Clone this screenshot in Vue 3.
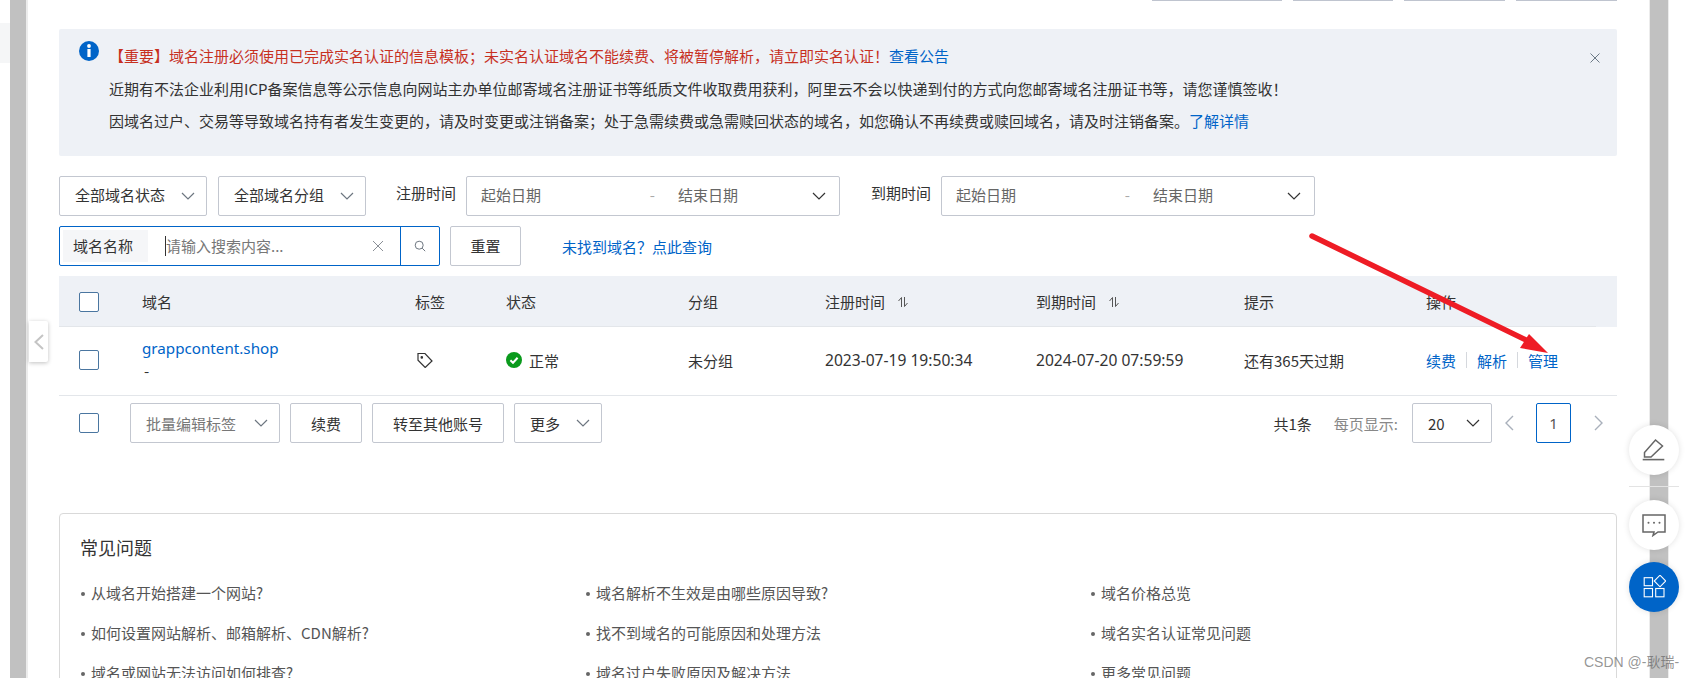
<template>
  <div class="page">
    <div class="rail"><div class="rail-mark"></div></div>
    <div class="scroll-left"></div>
    <div class="main">
      <div class="top-btns">
        <span class="top-btn w130"></span>
        <span class="top-btn w100"></span>
        <span class="top-btn w101"></span>
        <span class="top-btn w101"></span>
      </div>

      <div class="notice">
        <svg class="notice-icon" viewBox="0 0 20 20" width="20" height="20">
          <circle cx="10" cy="10" r="10" fill="#0064c8" />
          <rect x="8.4" y="8" width="3.2" height="8" fill="#fff" />
          <circle cx="10" cy="5" r="1.9" fill="#fff" />
        </svg>
        <div class="notice-text">
          <p class="line first">
            <span class="red">【重要】域名注册必须使用已完成实名认证的信息模板；未实名认证域名不能续费、将被暂停解析，请立即实名认证！</span>
            <a class="link">查看公告</a>
          </p>
          <p class="line">近期有不法企业利用ICP备案信息等公示信息向网站主办单位邮寄域名注册证书等纸质文件收取费用获利，阿里云不会以快递到付的方式向您邮寄域名注册证书等，请您谨慎签收！</p>
          <p class="line">因域名过户、交易等导致域名持有者发生变更的，请及时变更或注销备案；处于急需续费或急需赎回状态的域名，如您确认不再续费或赎回域名，请及时注销备案。<a class="link">了解详情</a></p>
        </div>
        <svg class="notice-close" viewBox="0 0 10 10" width="10" height="10">
          <path d="M0.5 0.5 9.5 9.5M9.5 0.5 0.5 9.5" stroke="#6c7a86" stroke-width="1" fill="none" />
        </svg>
      </div>

      <div class="filters">
        <div class="sel w148"><span>全部域名状态</span><svg class="chev" viewBox="0 0 14 8"><path d="M1 1l6 6 6-6" /></svg></div>
        <div class="sel w148"><span>全部域名分组</span><svg class="chev" viewBox="0 0 14 8"><path d="M1 1l6 6 6-6" /></svg></div>
        <span class="flabel reg">注册时间</span>
        <div class="range">
          <span class="rtext">起始日期</span><span class="rdash">-</span><span class="rtext">结束日期</span>
          <svg class="chev dark" viewBox="0 0 14 8"><path d="M1 1l6 6 6-6" /></svg>
        </div>
        <span class="flabel exp">到期时间</span>
        <div class="range">
          <span class="rtext">起始日期</span><span class="rdash">-</span><span class="rtext">结束日期</span>
          <svg class="chev dark" viewBox="0 0 14 8"><path d="M1 1l6 6 6-6" /></svg>
        </div>
      </div>

      <div class="search-row">
        <div class="search">
          <span class="search-type">域名名称</span>
          <span class="caret"></span>
          <span class="search-ph">请输入搜索内容...</span>
          <svg class="search-clear" viewBox="0 0 12 12" width="12" height="12"><path d="M1 1l10 10M11 1 1 11" /></svg>
          <span class="search-btn">
            <svg viewBox="0 0 12 12" width="12" height="12"><circle cx="5.2" cy="5.2" r="4" /><path d="M8.2 8.2l3 3" /></svg>
          </span>
        </div>
        <button class="btn reset">重置</button>
        <a class="link notfound">未找到域名？点此查询</a>
      </div>

      <div class="grid head">
        <span class="check"></span>
        <span>域名</span>
        <span>标签</span>
        <span>状态</span>
        <span>分组</span>
        <span class="sort">注册时间<svg viewBox="0 0 12 12" width="12" height="12"><path d="M4.5 11V1.5L1.5 5M7.5 1v9.5l3-3.5" /></svg></span>
        <span class="sort">到期时间<svg viewBox="0 0 12 12" width="12" height="12"><path d="M4.5 11V1.5L1.5 5M7.5 1v9.5l3-3.5" /></svg></span>
        <span>提示</span>
        <span>操作</span>
      </div>

      <div class="grid row">
        <span class="check"></span>
        <div class="domain">
          <a class="link name">grappcontent.shop</a>
          <span class="dash">-</span>
        </div>
        <svg class="tag" viewBox="0 0 16 16" width="16" height="16">
          <path d="M1 1.5h7l7 7.5-6.8 6.5L1 8.2z" />
          <circle cx="4.8" cy="5.4" r="0.7" />
        </svg>
        <span class="status">
          <svg viewBox="0 0 16 16" width="16" height="16">
            <circle cx="8" cy="8" r="8" fill="#0a9a1c" />
            <path d="M4.4 8.2l2.6 2.5 4.6-5" stroke="#fff" stroke-width="2" fill="none" />
          </svg>
          正常
        </span>
        <span>未分组</span>
        <span class="date">2023-07-19 19:50:34</span>
        <span class="date">2024-07-20 07:59:59</span>
        <span>还有365天过期</span>
        <span class="ops">
          <a class="link">续费</a><i></i><a class="link">解析</a><i></i><a class="link">管理</a>
        </span>
      </div>

      <div class="batch">
        <span class="check"></span>
        <div class="sel w150 muted"><span>批量编辑标签</span><svg class="chev" viewBox="0 0 14 8"><path d="M1 1l6 6 6-6" /></svg></div>
        <button class="btn w72">续费</button>
        <button class="btn w132">转至其他账号</button>
        <div class="sel w88"><span>更多</span><svg class="chev" viewBox="0 0 14 8"><path d="M1 1l6 6 6-6" /></svg></div>
        <div class="pager">
          <span class="total">共1条</span>
          <span class="per">每页显示:</span>
          <div class="sel w80"><span>20</span><svg class="chev dark" viewBox="0 0 14 8"><path d="M1 1l6 6 6-6" /></svg></div>
          <svg class="page-arrow prev" viewBox="0 0 10 16" width="10" height="16"><path d="M9 1 2 8l7 7" /></svg>
          <span class="page-num">1</span>
          <svg class="page-arrow next" viewBox="0 0 10 16" width="10" height="16"><path d="M1 1l7 7-7 7" /></svg>
        </div>
      </div>

      <div class="faq">
        <h3>常见问题</h3>
        <ul class="faq-list">
          <li v-for="q in questions" :key="q">{{ q }}</li>
        </ul>
      </div>
    </div>
    <div class="scroll-right"></div>

    <div class="collapse">
      <svg viewBox="0 0 10 16" width="10" height="16"><path d="M9 1 1.5 8 9 15" /></svg>
    </div>

    <svg class="arrow" viewBox="0 0 1685 678" width="1685" height="678">
      <path d="M1312 236 1530 342" stroke="#ee1c25" stroke-width="5.5" stroke-linecap="round" fill="none" />
      <path d="M1548 353 1529 334 1520 348z" fill="#ee1c25" />
    </svg>

    <div class="float f1">
      <svg viewBox="0 0 24 24" width="24" height="24">
        <path d="M2.5 19v-4.5L13.5 2l7 6L9 19z" />
        <path d="M0.7 21.6h21.6" stroke-width="1.6" />
      </svg>
    </div>
    <div class="float-sep"></div>
    <div class="float f2">
      <svg viewBox="0 0 24 24" width="24" height="24">
        <path d="M1 2h22v17h-7l-5 3.5 1-3.5H1z" />
        <circle cx="6.5" cy="9.7" r="1" class="dot" />
        <circle cx="12" cy="9.7" r="1" class="dot" />
        <circle cx="17.5" cy="9.7" r="1" class="dot" />
      </svg>
    </div>
    <div class="float f3">
      <svg viewBox="0 0 24 24" width="24" height="24">
        <rect x="2.2" y="2.7" width="8.3" height="8" />
        <rect x="2.2" y="13.5" width="8.3" height="8.3" />
        <rect x="13.7" y="13.5" width="8.3" height="8.3" />
        <path d="M18 0.2l5.8 5.8L18 11.8 12.2 6z" />
      </svg>
    </div>
    <span class="watermark">CSDN @-耿瑞-</span>
  </div>
</template>

<script setup>
const questions = [
  '从域名开始搭建一个网站?',
  '域名解析不生效是由哪些原因导致?',
  '域名价格总览',
  '如何设置网站解析、邮箱解析、CDN解析?',
  '找不到域名的可能原因和处理方法',
  '域名实名认证常见问题',
  '域名或网站无法访问如何排查?',
  '域名过户失败原因及解决方法',
  '更多常见问题'
]
</script>

<style>
html, body { margin: 0; background: #fff; overflow: hidden; }
</style>

<style scoped>
.page {
  position: relative;
  display: flex;
  width: 1685px;
  height: 678px;
  overflow: hidden;
  background: #fff;
  color: #333;
  font-family: "Noto Sans CJK SC", "Noto Sans", sans-serif;
  font-size: 15px;
}
.rail { width: 10px; flex: none; }
.rail-mark { height: 40px; margin-top: 23px; background: #f5f6f7; }
.scroll-left { width: 16px; flex: none; background: #c1c1c1; border-right: 2px solid #ececec; }
.scroll-right { width: 18px; flex: none; background: #c1c1c1; border-left: 1px solid #ececec; border-right: 1px solid #ececec; margin-left: 1px; }
.main { width: 1620px; flex: none; padding: 0 31px; box-sizing: border-box; min-width: 0; }
.link { color: #0064c8; text-decoration: none; }
.red { color: #c7301f; }

.top-btns { display: flex; justify-content: flex-end; gap: 11px; height: 1px; }
.top-btn { display: block; height: 1px; background: #bfc4cf; }
.w130 { width: 130px; }
.w100 { width: 100px; }
.w101 { width: 101px; }

.notice {
  display: flex;
  height: 127px;
  margin-top: 28px;
  background: #eef1f6;
  border-radius: 2px;
  box-sizing: border-box;
  padding: 11px 0 0 20px;
}
.notice-icon { flex: none; margin-top: 1px; }
.notice-text { flex: 1; padding-left: 10px; }
.line { margin: 0; height: 32px; line-height: 32px; font-size: 15px; white-space: nowrap; }
.line.first { height: 33px; margin-top: 0; }
.notice-close { flex: none; margin: 13px 17px 0 0; }

.filters { display: flex; align-items: center; margin-top: 20px; height: 40px; }
.sel, .range, .btn {
  display: flex;
  align-items: center;
  height: 40px;
  box-sizing: border-box;
  border: 1px solid #c3c7d0;
  border-radius: 2px;
  background: #fff;
  font-family: inherit;
  font-size: 15px;
  color: #333;
}
.sel { justify-content: space-between; padding: 0 11px 0 15px; flex: none; }
.filters .sel span, .filters .rtext, .filters .rdash { padding-bottom: 3px; }
.w148 { width: 148px; }
.w148 + .w148 { margin-left: 11px; }
.w150 { width: 150px; }
.w88 { width: 88px; }
.w80 { width: 80px; }
.w72 { width: 72px; }
.w132 { width: 132px; }
.muted { color: #777; }
.chev { width: 14px; height: 8px; flex: none; }
.chev path { fill: none; stroke: #6d7680; stroke-width: 1.2; }
.chev.dark path { stroke: #333; }
.flabel { flex: none; width: 59px; white-space: nowrap; padding-bottom: 7px; }
.flabel.reg { margin-left: 30px; margin-right: 11px; }
.flabel.exp { margin-left: 31px; margin-right: 11px; }
.range { width: 374px; padding: 0 13px 0 14px; flex: none; color: #666; }
.rtext { flex: none; width: 60px; }
.rdash { flex: none; width: 137px; text-align: right; padding-right: 23px; box-sizing: border-box; color: #aaa; }
.range .chev { margin-left: auto; }

.search-row { display: flex; align-items: center; margin-top: 10px; height: 40px; }
.search {
  display: flex;
  align-items: center;
  width: 381px;
  height: 40px;
  box-sizing: border-box;
  border: 1px solid #0064c8;
  border-radius: 2px;
  padding-left: 3px;
  flex: none;
}
.search-type {
  width: 85px;
  height: 32px;
  line-height: 31px;
  flex: none;
  background: #f5f6f8;
  padding-left: 10px;
  box-sizing: border-box;
}
.caret { width: 1px; height: 20px; background: #333; margin-left: 17px; flex: none; }
.search-ph { color: #777; flex: 1; white-space: nowrap; padding-bottom: 2px; }
.search-clear { flex: none; margin-right: 16px; }
.search-clear path { stroke: #8a8f96; stroke-width: 1; fill: none; }
.search-btn {
  display: flex;
  align-items: center;
  justify-content: center;
  width: 39px;
  height: 38px;
  flex: none;
  border-left: 1px solid #0064c8;
  box-sizing: border-box;
}
.search-btn svg { fill: none; stroke: #6d7680; stroke-width: 1; }
.btn { justify-content: center; padding: 0; flex: none; }
.reset { width: 71px; margin-left: 10px; padding-bottom: 2px; }
.notfound { margin-left: 41px; white-space: nowrap; }

.grid {
  display: grid;
  grid-template-columns: 63px 273px 91px 182px 137px 211px 208px 182px 1fr;
  align-items: center;
  padding-left: 20px;
}
.head {
  height: 51px;
  margin-top: 10px;
  box-sizing: border-box;
  background: linear-gradient(#e3e6ea, #e3e6ea) left bottom / 1537px 1px no-repeat, #eef1f6;
}
.row { height: 69px; padding-bottom: 2px; border-bottom: 1px solid #e3e6ea; box-sizing: border-box; }
.check { display: block; width: 20px; height: 20px; box-sizing: border-box; border: 1px solid #4a76a0; border-radius: 2px; background: #fff; flex: none; }
.sort { display: flex; align-items: center; gap: 12px; }
.sort svg { fill: none; stroke: #555; stroke-width: 1; }
.domain { display: flex; flex-direction: column; }
.name { font-family: "Noto Sans", sans-serif; font-size: 15.2px; line-height: 22px; }
.dash { line-height: 24px; padding-left: 2px; color: #333; }
.tag { margin-left: 2px; fill: none; stroke: #333; stroke-width: 1.2; }
.status { display: flex; align-items: center; gap: 7px; }
.date { font-family: "Noto Sans", sans-serif; font-size: 15.6px; white-space: nowrap; }
.ops { display: flex; align-items: center; }
.ops i { display: block; width: 1px; height: 16px; background: #d5d8dd; margin: 0 10px; }

.batch { display: flex; align-items: center; height: 40px; margin-top: 7px; padding-left: 20px; gap: 10px; }
.batch .check { margin-right: 21px; }
.pager { display: flex; align-items: center; margin-left: auto; margin-right: 0; }
.total { color: #333; margin-right: 22px; }
.per { color: #888; margin-right: 14px; }
.page-arrow { fill: none; stroke: #a9b0bb; stroke-width: 1.4; }
.prev { margin-left: 12px; }
.next { margin-left: 23px; margin-right: 13px; }
.page-num {
  display: flex;
  align-items: center;
  justify-content: center;
  width: 35px;
  height: 40px;
  box-sizing: border-box;
  margin-left: 22px;
  border: 1px solid #0064c8;
  border-radius: 2px;
  color: #555;
  font-family: "Noto Sans", sans-serif;
}

.faq {
  margin-top: 70px;
  height: 200px;
  box-sizing: border-box;
  border: 1px solid #d9d9d9;
  border-radius: 4px;
  padding: 19px 20px 0;
}
.faq h3 { margin: 0; font-size: 18px; font-weight: 400; line-height: 28px; color: #333; }
.faq-list {
  display: grid;
  grid-template-columns: 505px 505px 1fr;
  list-style: none;
  margin: 12px 0 0;
  padding: 0;
}
.faq-list li { height: 40px; line-height: 40px; white-space: nowrap; font-size: 15px; color: #555; padding-left: 11px; position: relative; }
.faq-list li::before {
  content: "";
  position: absolute;
  left: 1px;
  top: 19px;
  width: 4px;
  height: 4px;
  border-radius: 50%;
  background: #666;
}

.collapse {
  position: absolute;
  left: 29px;
  top: 321px;
  width: 19px;
  height: 41px;
  display: flex;
  align-items: center;
  justify-content: center;
  background: #fff;
  border-radius: 0 2px 2px 0;
  box-shadow: 0 1px 4px rgba(0, 0, 0, 0.25);
}
.collapse svg { fill: none; stroke: #c4c4c4; stroke-width: 2; }

.arrow { position: absolute; left: 0; top: 0; pointer-events: none; }

.float {
  position: absolute;
  left: 1629px;
  width: 50px;
  height: 50px;
  border-radius: 50%;
  background: #fff;
  box-shadow: 0 0 6px rgba(0, 0, 0, 0.12);
  display: flex;
  align-items: center;
  justify-content: center;
}
.float svg { fill: none; stroke: #666; stroke-width: 1.5; }
.float .dot { fill: #666; stroke: none; }
.f1 { top: 425px; }
.f2 { top: 500px; }
.f3 { top: 562px; background: #0064c8; }
.f3 svg { stroke: #fff; stroke-width: 1.1; }
.float-sep { position: absolute; left: 1629px; top: 486px; width: 50px; height: 1px; background: #e3e3e3; }
.watermark {
  position: absolute;
  left: 1584px;
  top: 652px;
  font-family: "Liberation Sans", "Noto Sans CJK SC", sans-serif;
  font-size: 14px;
  line-height: 20px;
  color: rgba(90, 90, 90, 0.65);
  white-space: nowrap;
}
</style>
